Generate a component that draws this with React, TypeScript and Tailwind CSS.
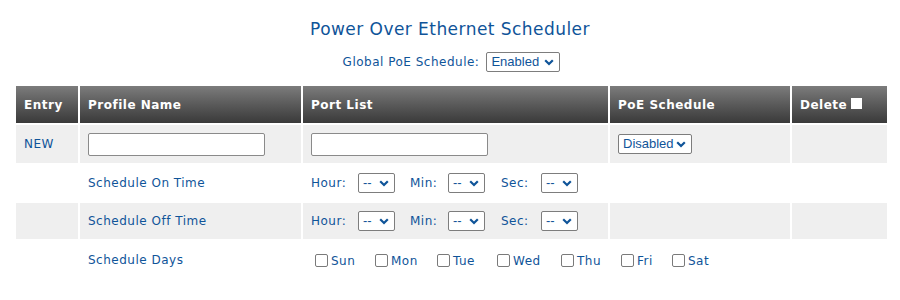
import type { ReactNode } from "react";

const FONT = "font-['Verdana','DejaVu_Sans',sans-serif]";

function Chevron() {
  return (
    <svg width="10" height="7" viewBox="0 0 10 7" className="shrink-0">
      <path d="M1.2 1.2 L5 5 L8.8 1.2" fill="none" stroke="#0f5499" strokeWidth="2.2" />
    </svg>
  );
}

function Select(props: { value: string; width: string }) {
  return (
    <span
      className={`inline-flex h-[20px] items-center justify-between rounded-[2px] border border-[#7d7d7d] bg-white pl-[4px] pr-[5px] align-middle font-['Liberation_Sans',Arial,sans-serif] text-[13px] tracking-normal text-[#0f5499] ${props.width}`}
    >
      <span>{props.value}</span>
      <Chevron />
    </span>
  );
}

function TextBox() {
  return <span className="inline-block h-[23px] w-[177px] rounded-[2px] border border-[#8a8a8a] bg-white align-middle" />;
}

function Check() {
  return <span className="inline-block h-[13px] w-[13px] rounded-[2px] border border-[#7a7a7a] bg-white" />;
}

function Th(props: { children: ReactNode; w: string }) {
  return (
    <th
      className={`h-[37px] bg-gradient-to-b from-[#7c7c7c] to-[#3a3a3a] px-[8px] text-left text-[12px] font-bold tracking-[0.5px] text-white ${props.w}`}
    >
      {props.children}
    </th>
  );
}

function TimeRow(props: { label: string; gray: boolean }) {
  const bg = props.gray ? "bg-[#efefef]" : "bg-white";
  return (
    <tr className="h-[36px]">
      <td className={bg} />
      <td className={`${bg} px-[8px]`}>{props.label}</td>
      <td className={`${bg} px-[8px]`}>
        <div className="flex items-center">
          <span className="w-[47px]">Hour:</span>
          <Select value="--" width="w-[37px]" />
          <span className="ml-[15px] w-[38px]">Min:</span>
          <Select value="--" width="w-[37px]" />
          <span className="ml-[16px] w-[40px]">Sec:</span>
          <Select value="--" width="w-[37px]" />
        </div>
      </td>
      <td className={bg} />
      <td className={bg} />
    </tr>
  );
}

const DAYS = [
  { d: "Sun", w: "w-[60px]" },
  { d: "Mon", w: "w-[62px]" },
  { d: "Tue", w: "w-[60px]" },
  { d: "Wed", w: "w-[64px]" },
  { d: "Thu", w: "w-[60px]" },
  { d: "Fri", w: "w-[51px]" },
  { d: "Sat", w: "w-[50px]" },
];

export default function App() {
  return (
    <div className={`h-[300px] w-[900px] bg-white ${FONT} text-[12px] tracking-[0.5px] text-[#0f5499]`}>
      <h1 className="pt-[17px] text-center text-[17px] leading-[24px] tracking-[0.45px] text-[#0f5499]">
        Power Over Ethernet Scheduler
      </h1>
      <div className="mt-[11px] flex items-center justify-center gap-[7px] pl-[3px]">
        <span>Global PoE Schedule:</span>
        <Select value="Enabled" width="w-[74px]" />
      </div>
      <table className="ml-[14px] mt-[12px] w-[875px] table-fixed border-separate border-spacing-[2px]">
        <thead>
          <tr>
            <Th w="w-[62px]">Entry</Th>
            <Th w="w-[221px]">Profile Name</Th>
            <Th w="w-[305px]">Port List</Th>
            <Th w="w-[180px]">PoE Schedule</Th>
            <Th w="w-[95px]">
              <span className="flex items-center gap-[4px]">
                Delete
                <span className="mt-[-2px] inline-block h-[11px] w-[11px] bg-white" />
              </span>
            </Th>
          </tr>
        </thead>
        <tbody>
          <tr className="h-[38px]">
            <td className="bg-[#efefef] px-[8px]">NEW</td>
            <td className="bg-[#efefef] px-[8px]">
              <TextBox />
            </td>
            <td className="bg-[#efefef] px-[8px]">
              <TextBox />
            </td>
            <td className="bg-[#efefef] px-[8px]">
              <Select value="Disabled" width="w-[74px]" />
            </td>
            <td className="bg-[#efefef]" />
          </tr>
          <TimeRow label="Schedule On Time" gray={false} />
          <TimeRow label="Schedule Off Time" gray={true} />
          <tr className="h-[38px]">
            <td />
            <td className="px-[8px]">Schedule Days</td>
            <td className="px-[8px]" colSpan={3}>
              <div className="flex items-center pl-[4px]">
                {DAYS.map((x) => (
                  <span key={x.d} className={`flex items-center gap-[3px] ${x.w}`}>
                    <Check />
                    <span className="mt-[2px]">{x.d}</span>
                  </span>
                ))}
              </div>
            </td>
          </tr>
        </tbody>
      </table>
    </div>
  );
}
